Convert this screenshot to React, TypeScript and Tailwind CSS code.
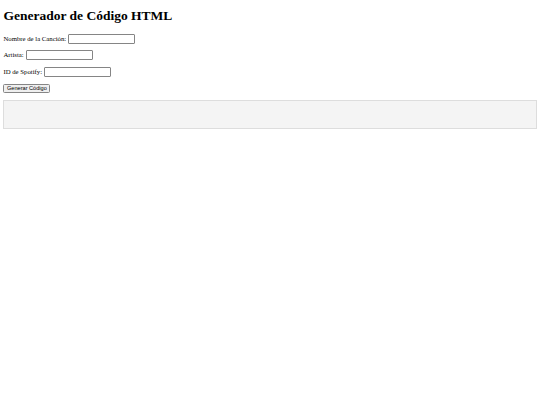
import React from "react";

const serif = { fontFamily: '"Liberation Serif", "Times New Roman", serif' };

function Field({ label }: { label: string }) {
  return (
    <div className="flex items-center h-[10px] mb-[6.5px]">
      <span className="text-[6.75px] leading-[10px] text-black">{label}</span>
      <span className="w-[2px]" />
      <input
        type="text"
        className="w-[67px] h-[10px] border border-[#858585] rounded-[1px] bg-white outline-none"
      />
    </div>
  );
}

export default function App() {
  return (
    <div className="bg-white w-[540px] h-[405px] px-[3.4px] text-black" style={serif}>
      <h1 className="text-[13.5px] font-bold leading-[15.5px] pt-[8px] mb-[10px]">
        Generador de Código HTML
      </h1>
      <Field label="Nombre de la Canción:" />
      <Field label="Artista:" />
      <Field label="ID de Spotify:" />
      <div className="h-[10px] flex items-center mt-[0px]">
        <button
          className="h-[9px] w-[47px] border border-[#858585] rounded-[1.5px] bg-[#efefef] text-[5.6px] leading-[7px] text-black flex items-center justify-center"
          style={{ fontFamily: '"Liberation Sans", Arial, sans-serif' }}
        >
          Generar Código
        </button>
      </div>
      <div className="mt-[7px] h-[29px] bg-[#f4f4f4] border border-[#dddddd]" />
    </div>
  );
}
